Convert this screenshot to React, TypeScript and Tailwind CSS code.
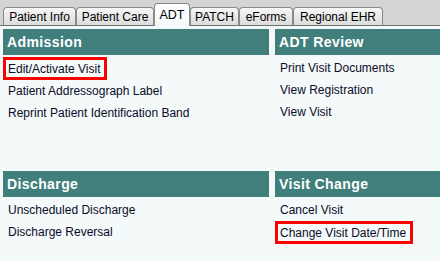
import React from "react";

const tabs = [
  { label: "Patient Info", w: "w-[73px]" },
  { label: "Patient Care", w: "w-[78px]" },
  { label: "ADT", w: "w-[36px]" },
  { label: "PATCH", w: "w-[49px]" },
  { label: "eForms", w: "w-[54px]" },
  { label: "Regional EHR", w: "w-[90px]" },
];
const activeTab = "ADT";

interface SectionProps {
  title: string;
  items: string[];
  boxed?: string;
}

function Section({ title, items, boxed }: SectionProps) {
  return (
    <div className="flex flex-col">
      <div className="h-[26px] bg-[#417f7c] flex items-center pl-[4px] text-white font-bold text-[14px] tracking-[0.4px]">
        {title}
      </div>
      <div className="mt-[2px] flex flex-col">
        {items.map((item) =>
          item === boxed ? (
            <div key={item} className="h-[23px] flex">
              <span className="inline-flex items-center border-[3px] border-[#ff0000] pl-[2px] pr-[4px]">
                {item}
              </span>
            </div>
          ) : (
            <div key={item} className="h-[22px] flex items-center pl-[5px]">
              {item}
            </div>
          )
        )}
      </div>
    </div>
  );
}

export default function App() {
  return (
    <div
      className="w-[440px] h-[261px] bg-[#f4f9f9] text-[12px] text-[#0b0b28] overflow-hidden"
      style={{ fontFamily: '"Liberation Sans", Arial, sans-serif' }}
    >
      {/* Tab strip */}
      <div className="h-[26px] bg-[#d4d4d4] border-b border-[#707070] flex items-end pl-[3px]">
        {tabs.map((tab) =>
          tab.label === activeTab ? (
            <div
              key={tab.label}
              className={`${tab.w} h-[23px] -mb-px flex items-center justify-center text-[12.5px] text-black bg-gradient-to-b from-white to-[#f4f9f9] border border-b-0 border-[#8a8a8a] rounded-t-[4px]`}
            >
              {tab.label}
            </div>
          ) : (
            <div
              key={tab.label}
              className={`${tab.w} h-[18px] flex items-center justify-center text-[12px] text-black bg-gradient-to-b from-[#f7f7f7] to-[#dcdcdc] border border-b-0 border-[#8a8a8a] rounded-t-[4px]`}
            >
              {tab.label}
            </div>
          )
        )}
      </div>

      {/* Content grid */}
      <div className="grid grid-cols-[266px_165px] grid-rows-[142px_auto] gap-x-[6px] pl-[3px] pt-[3px]">
        <Section
          title="Admission"
          items={["Edit/Activate Visit", "Patient Addressograph Label", "Reprint Patient Identification Band"]}
          boxed="Edit/Activate Visit"
        />
        <Section
          title="ADT Review"
          items={["Print Visit Documents", "View Registration", "View Visit"]}
        />
        <Section title="Discharge" items={["Unscheduled Discharge", "Discharge Reversal"]} />
        <Section
          title="Visit Change"
          items={["Cancel Visit", "Change Visit Date/Time"]}
          boxed="Change Visit Date/Time"
        />
      </div>
    </div>
  );
}
